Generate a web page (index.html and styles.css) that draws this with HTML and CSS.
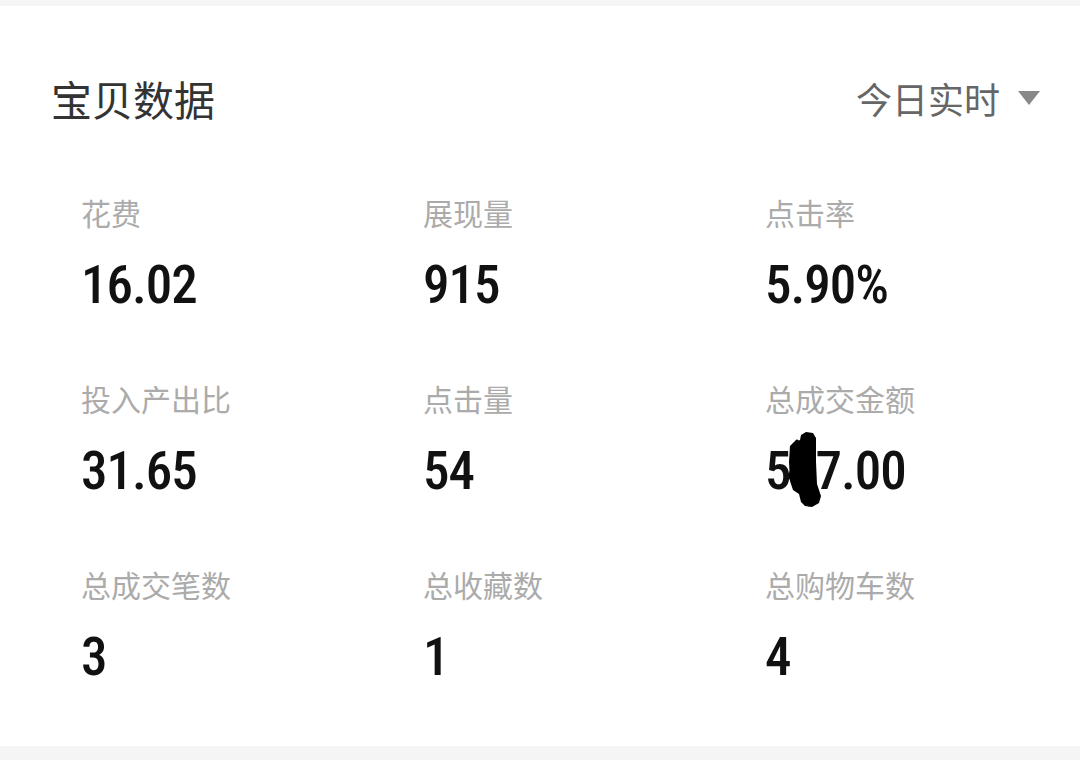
FILE: index.html
```html
<!DOCTYPE html>
<html lang="zh-CN">
<head>
  <meta charset="UTF-8" />
  <title>宝贝数据</title>
  <link rel="stylesheet" href="styles.css">
</head>
<body>
  <div class="card">
    <div class="card-head">
      <div class="title">宝贝数据</div>
      <div class="range">今日实时 <span class="caret"></span></div>
    </div>

    <div class="stats">
      <div class="stat">
        <div class="label">花费</div>
        <div class="value">16.02</div>
      </div>
      <div class="stat">
        <div class="label">展现量</div>
        <div class="value">915</div>
      </div>
      <div class="stat">
        <div class="label">点击率</div>
        <div class="value">5.90%</div>
      </div>
      <div class="stat">
        <div class="label">投入产出比</div>
        <div class="value">31.65</div>
      </div>
      <div class="stat">
        <div class="label">点击量</div>
        <div class="value">54</div>
      </div>
      <div class="stat">
        <div class="label">总成交金额</div>
        <div class="value">5<span class="blot"><svg viewBox="0 0 34 76" width="34" height="76"><path d="M11 8 L12 3 L17 0 L24 1 L27 6 L27 30 L28 52 L32 64 L30 71 L23 75 L16 74 L12 70 L10 62 L4 58 L1 49 L0 30 L1 14 L5 10 Z" fill="#000"/><path d="M4 14 L8 9 M20 73 L27 68 M2 40 L0 46" stroke="#000" stroke-width="3" stroke-linecap="round"/></svg></span>7.00</div>
      </div>
      <div class="stat">
        <div class="label">总成交笔数</div>
        <div class="value">3</div>
      </div>
      <div class="stat">
        <div class="label">总收藏数</div>
        <div class="value">1</div>
      </div>
      <div class="stat">
        <div class="label">总购物车数</div>
        <div class="value">4</div>
      </div>
    </div>
  </div>
  <div class="card next"></div>
</body>
</html>
```

FILE: styles.css
```css
body {
  margin: 0;
  padding: 6px 0 0;
  background: #f5f5f5;
  font-family: "Noto Sans CJK SC", "Noto Sans", sans-serif;
}
.card {
  background: #fff;
  padding: 66px 0 61px;
}
.card.next {
  margin-top: 14px;
  height: 40px;
  padding: 0;
}
.card-head {
  display: flex;
  justify-content: space-between;
  align-items: center;
  padding: 0 40px 0 51px;
  margin-bottom: 68px;
}
.title {
  font-size: 41px;
  line-height: 52px;
  color: #333;
}
.range {
  font-size: 36px;
  line-height: 52px;
  color: #666;
  display: flex;
  align-items: center;
  gap: 18px;
}
.caret {
  width: 0;
  height: 0;
  border-left: 11px solid transparent;
  border-right: 11px solid transparent;
  border-top: 14px solid #888;
}
.stats {
  display: grid;
  grid-template-columns: 342px 342px 1fr;
  row-gap: 65px;
  padding-left: 81px;
}
.label {
  font-size: 30px;
  line-height: 40px;
  color: #ababab;
  margin-bottom: 25px;
}
.value {
  font-family: "Roboto Condensed", "Liberation Sans Narrow", "Arial Narrow", Roboto, sans-serif;
  font-weight: 500;
  font-size: 53px;
  letter-spacing: -1px;
  line-height: 56px;
  color: #111;
}
.blot {
  position: relative;
  display: inline-block;
  width: 25px;
  height: 40px;
}
.blot svg {
  position: absolute;
  left: -2px;
  top: -17px;
}
```
